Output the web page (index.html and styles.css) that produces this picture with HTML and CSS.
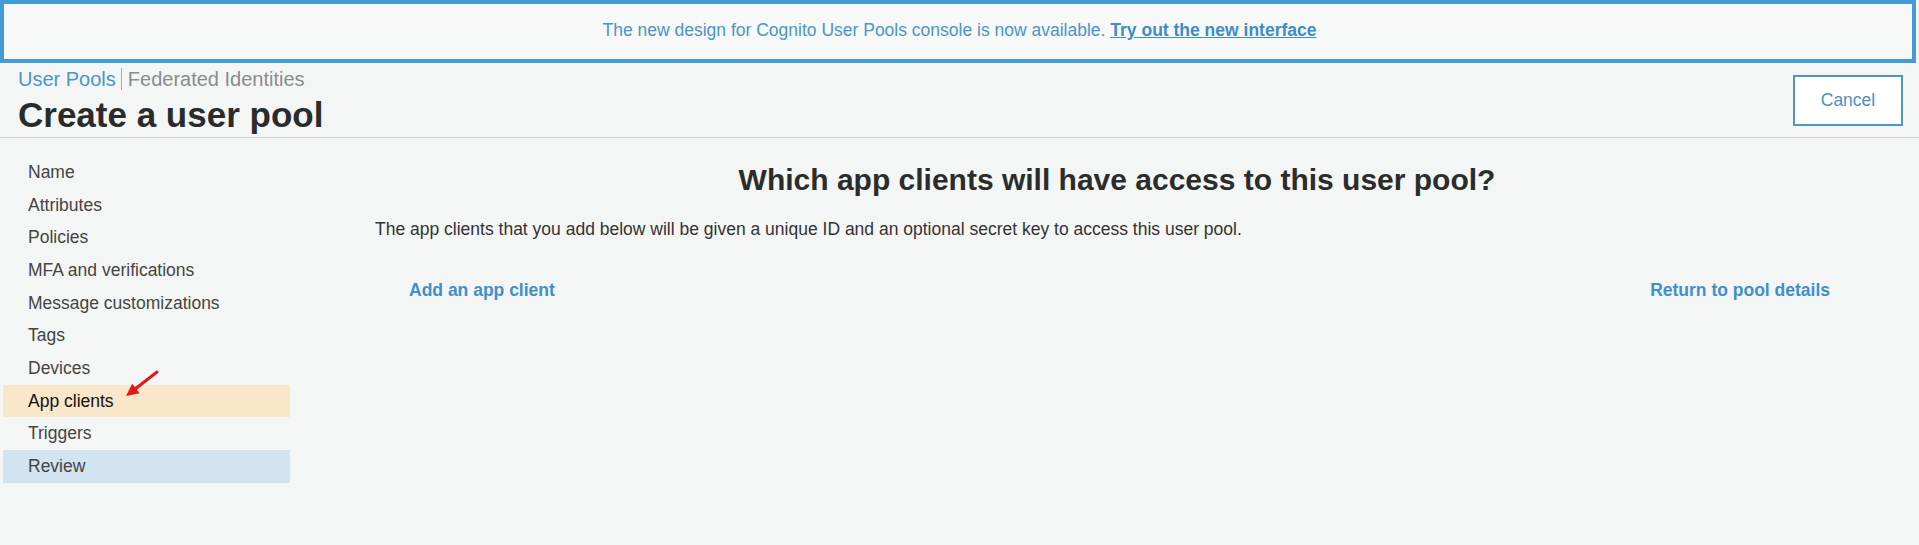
FILE: index.html
```html
<!DOCTYPE html>
<html lang="en">
<head>
<meta charset="utf-8">
<title>Create a user pool</title>
<link rel="stylesheet" href="styles.css">
</head>
<body>
<div class="banner">
  <p class="banner-text">The new design for Cognito User Pools console is now available. <a class="banner-link" href="#">Try out the new interface</a></p>
</div>
<header class="header">
  <div class="title-block">
    <div class="crumbs"><a class="crumb-active" href="#">User Pools</a><a class="crumb" href="#">Federated Identities</a></div>
    <h1 class="title">Create a user pool</h1>
  </div>
  <button class="cancel">Cancel</button>
</header>
<div class="layout">
  <nav class="sidebar">
    <div class="nav-item">Name</div>
    <div class="nav-item">Attributes</div>
    <div class="nav-item">Policies</div>
    <div class="nav-item">MFA and verifications</div>
    <div class="nav-item">Message customizations</div>
    <div class="nav-item">Tags</div>
    <div class="nav-item">Devices</div>
    <div class="nav-item nav-current">App clients
      <svg class="arrow" width="45" height="36" viewBox="0 0 45 36"><line x1="39" y1="5" x2="16.5" y2="22.5" stroke="#e8141b" stroke-width="3" stroke-linecap="round"/><polygon points="8,29 21.5,26.2 14.2,16.8" fill="#e8141b"/></svg>
    </div>
    <div class="nav-item">Triggers</div>
    <div class="nav-item nav-review">Review</div>
  </nav>
  <main class="main">
    <h2 class="heading">Which app clients will have access to this user pool?</h2>
    <p class="desc">The app clients that you add below will be given a unique ID and an optional secret key to access this user pool.</p>
    <div class="actions">
      <a class="action" href="#">Add an app client</a>
      <a class="action" href="#">Return to pool details</a>
    </div>
  </main>
</div>
</body>
</html>
```
FILE: styles.css
```css
html, body {
  margin: 0;
  padding: 0;
  background: #f4f6f6;
  font-family: "Liberation Sans", Arial, sans-serif;
  height: 100%;
}
a { text-decoration: none; }

.banner {
  box-sizing: border-box;
  width: calc(100% - 3px);
  height: 63px;
  border: 4px solid #449bd6;
  background: #f7f8f8;
  display: flex;
  align-items: center;
  justify-content: center;
}
.banner-text {
  margin: 0 0 0 3px;
  font-size: 17.5px;
  line-height: 21px;
  color: #4a95cc;
  position: relative;
  top: -1px;
}
.banner-link {
  color: #3f8cc6;
  font-weight: bold;
  text-decoration: underline;
}

.header {
  display: flex;
  justify-content: space-between;
  padding: 4px 16px 2px 18px;
  border-bottom: 1px solid #d4d6d6;
}
.crumbs {
  font-size: 20px;
  line-height: 24px;
}
.crumb-active {
  color: #4a95cc;
  padding-right: 5px;
}
.crumb {
  color: #8a8c8c;
  border-left: 1px solid #aaa;
  padding-left: 6px;
}
.title {
  margin: 4px 0 0;
  font-size: 35px;
  line-height: 40px;
  font-weight: bold;
  color: #2a2b2b;
}
.cancel {
  align-self: flex-start;
  margin-top: 8px;
  width: 110px;
  height: 51px;
  box-sizing: border-box;
  border: 2px solid #4f95c4;
  background: #fff;
  color: #4d8fc4;
  font-family: "Liberation Sans", Arial, sans-serif;
  font-size: 17.5px;
  padding: 0;
}

.layout {
  display: grid;
  grid-template-columns: 287px 1fr;
  margin-left: 3px;
}
.sidebar {
  padding-top: 18px;
}
.nav-item {
  position: relative;
  padding-left: 25px;
  font-size: 17.5px;
  line-height: 32.67px;
  height: 32.67px;
  color: #444;
}
.nav-current {
  background: #fae6c8;
  color: #111;
}
.nav-review {
  background: #d1e4f0;
}
.arrow {
  position: absolute;
  left: 115px;
  top: -18px;
}

.main {
  padding: 0 60px 0 85px;
}
.heading {
  margin: 24px 0 0;
  text-align: center;
  font-size: 30px;
  line-height: 36px;
  font-weight: bold;
  color: #2b2c2c;
}
.desc {
  margin: 21px 0 0;
  font-size: 17.5px;
  line-height: 21px;
  color: #333;
}
.actions {
  display: flex;
  justify-content: space-between;
  margin-top: 40px;
  padding: 0 29px 0 34px;
  font-size: 17.5px;
  line-height: 21px;
}
.action {
  color: #3f8fcf;
  font-weight: bold;
}
```
